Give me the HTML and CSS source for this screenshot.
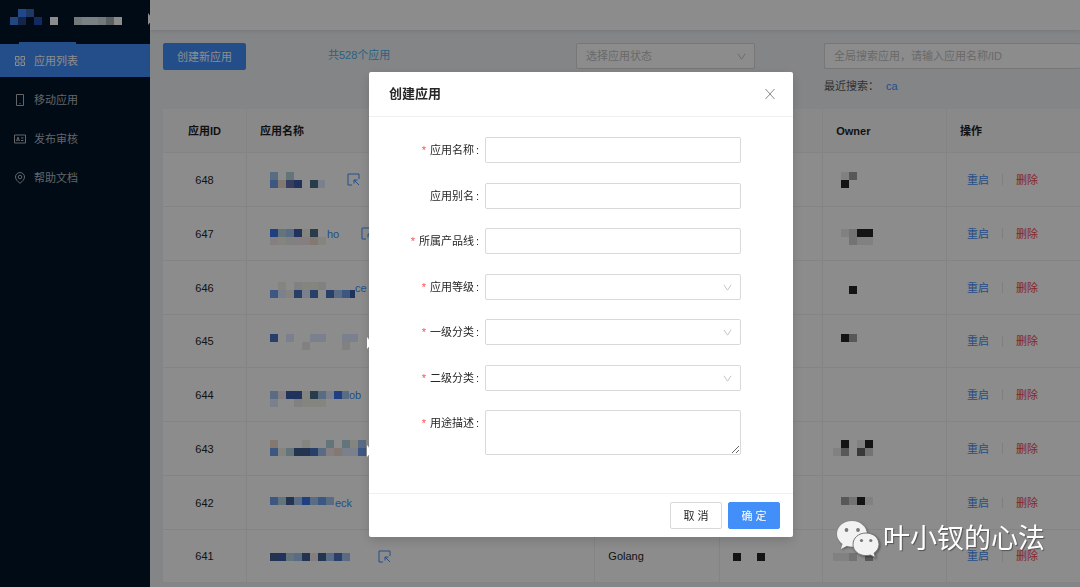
FILE: index.html
```html
<!DOCTYPE html>
<html lang="zh-CN">
<head>
<meta charset="utf-8">
<title>应用列表</title>
<link rel="stylesheet" href="styles.css">
</head>
<body>
<div class="layout">
  <aside class="sidebar">
    <div class="brand"><svg class="mosaic" data-top="-8" data-cells="_AB___________|CD_E_W__QRRQSW"></svg></div>
    <nav class="menu">
      <a class="menu-item active" href="#list">
        <svg class="menu-icon" viewBox="0 0 12 12"><path d="M1.500 1.500h3.500v3.500h-3.500zM7 1.500h3.500v3.500H7zM1.500 7h3.500v3.500h-3.500zM7 7h3.500v3.500H7z"/></svg>应用列表</a>
      <a class="menu-item" href="#mobile">
        <svg class="menu-icon" viewBox="0 0 12 12"><path d="M2.500.5h7v11h-7zM5.500 9.500h1"/></svg>移动应用</a>
      <a class="menu-item" href="#review">
        <svg class="menu-icon" viewBox="0 0 12 12"><path d="M.5 2h11v8H.5zM2.500 8l1.500-4 1.500 4M3 7h2M7 5h2.500M7 7.500h2.500"/></svg>发布审核</a>
      <a class="menu-item" href="#docs">
        <svg class="menu-icon" viewBox="0 0 12 12"><path d="M6 11.300C3.500 9.300 1.500 7.400 1.500 5a4.500 4.500 0 0 1 9 0c0 2.400-2 4.300-4.500 6.300z"/><circle cx="6" cy="5" r="1.800"/></svg>帮助文档</a>
    </nav>
  </aside>
  <div class="page">
    <header class="topbar"></header>
    <main class="content">
      <div class="toolbar">
        <div><button class="btn btn-primary btn-wide" type="button">创建新应用</button></div>
        <div class="count">共528个应用</div>
        <div class="select-wrap status">
          <select class="field placeholder" aria-label="应用状态"><option>选择应用状态</option></select>
          <svg class="arrow" viewBox="0 0 10 10"><path d="M1 2l4 6 4-6"/></svg>
        </div>
        <div class="search">
          <input class="field" type="text" aria-label="搜索应用" placeholder="全局搜索应用，请输入应用名称/ID">
          <div class="recent">最近搜索：<a href="#ca">ca</a></div>
        </div>
      </div>
      <table class="apps">
        <colgroup><col class="c-id"><col class="c-name"><col class="c-lang"><col class="c-line"><col class="c-owner"><col class="c-ops"></colgroup>
        <thead><tr><th class="id">应用ID</th><th>应用名称</th><th></th><th></th><th>Owner</th><th>操作</th></tr></thead>
        <tbody id="rows"></tbody>
      </table>
    </main>
  </div>
</div>

<div class="overlay">
  <form class="modal" role="dialog" aria-labelledby="dialog-title">
    <div class="modal-head">
      <h1 id="dialog-title">创建应用</h1>
      <button class="close" type="button" aria-label="关闭"><svg viewBox="0 0 12 12"><path d="M1.500 1l9 10M10.500 1l-9 10"/></svg></button>
    </div>
    <div class="modal-body">
      <div class="row"><label class="required" for="name">应用名称</label><input class="field" id="name" type="text"></div>
      <div class="row"><label for="alias">应用别名</label><input class="field" id="alias" type="text"></div>
      <div class="row"><label class="required" for="product">所属产品线</label><input class="field" id="product" type="text"></div>
      <div class="row"><label class="required" for="level">应用等级</label><div class="select-wrap"><select class="field" id="level"><option></option></select><svg class="arrow" viewBox="0 0 10 10"><path d="M1 2l4 6 4-6"/></svg></div></div>
      <div class="row"><label class="required" for="cat1">一级分类</label><div class="select-wrap"><select class="field" id="cat1"><option></option></select><svg class="arrow" viewBox="0 0 10 10"><path d="M1 2l4 6 4-6"/></svg></div></div>
      <div class="row"><label class="required" for="cat2">二级分类</label><div class="select-wrap"><select class="field" id="cat2"><option></option></select><svg class="arrow" viewBox="0 0 10 10"><path d="M1 2l4 6 4-6"/></svg></div></div>
      <div class="row"><label class="required" for="desc">用途描述</label><textarea class="field area" id="desc"></textarea></div>
    </div>
    <div class="modal-foot">
      <button class="btn" type="button">取 消</button>
      <button class="btn btn-primary" type="button">确 定</button>
    </div>
  </form>
</div>

<div class="watermark">
  <svg viewBox="0 0 44 38">
    <path d="M16 1C7.200 1 1 6.800 1 14c0 4.200 2.200 7.500 5.500 9.900L5 29l5.800-3c1.700.5 3.400.7 5.200.7C24.500 26.700 31 21 31 14S24.500 1 16 1z"/>
    <circle class="eye" cx="10.500" cy="10" r="1.900"/><circle class="eye" cx="22" cy="10" r="1.900"/>
    <path class="front" d="M30 13c-7.500 0-13 5-13 11.300s5.500 11.300 13 11.300c1.500 0 3-.2 4.300-.6L39.500 37.500 38 33.200c3-2.100 5-5.200 5-8.900C43 18 37.500 13 30 13z"/>
    <circle class="eye" cx="25.500" cy="20.500" r="1.600"/><circle class="eye" cx="34.800" cy="20.500" r="1.600"/>
  </svg>
  <span>叶小钗的心法</span>
</div>
<script src="app.js"></script>
</body>
</html>
```

FILE: styles.css
```css
* { box-sizing: border-box; }
body {
  margin: 0;
  font: 11px/18px "Liberation Sans", "Noto Sans CJK SC", sans-serif;
  color: #262626;
  background: #f0f2f5;
  overflow: hidden;
}
a { color: #428ffa; text-decoration: none; }
button, input, select, textarea { font: inherit; color: inherit; }
svg { fill: none; stroke: currentColor; }

.layout { display: flex; min-height: 100vh; }
.sidebar { flex: 0 0 150px; background: #001529; position: relative; }
.sidebar::after {
  content: ""; position: absolute; right: 0; top: 13px;
  width: 2px; height: 12px; background: #fff;
  clip-path: polygon(0 0, 100% 20%, 100% 80%, 0 100%);
}
.brand { height: 44px; padding: 1px 0 0 10px; }
.menu { display: flex; flex-direction: column; gap: 6px; }
.menu-item {
  display: flex; align-items: center; gap: 8px;
  height: 33px; padding-left: 14px; color: #b4b9bf; position: relative;
}
.menu-item.active { background: #428ffa; color: #fff; }
.menu-item.active::before {
  content: ""; position: absolute; left: 19px; top: -2px;
  width: 57px; height: 2px; background: #428ffa;
}
.menu-icon { width: 12px; height: 12px; }

.page { flex: 1; min-width: 0; overflow: hidden; }
.topbar { height: 30px; background: #fff; box-shadow: 0 1px 4px rgba(0, 21, 41, .12); }
.content { padding: 13px 0 0 13px; }
.toolbar {
  display: grid; grid-template-columns: 165fr 248fr 248fr 256fr;
  align-items: start; min-height: 66px;
}
.count { line-height: 24px; color: #4bb4f0; }
.status { margin-right: 69px; }
.recent { margin-top: 8px; color: #595959; }
.recent a { margin-left: 7px; }
.search .field { border-right: 0; }

.field {
  display: block; width: 100%; height: 26px; padding: 0 9px;
  border: 1px solid #d9d9d9; border-radius: 2px; background: #fff; outline: 0;
}
.field::placeholder, .placeholder { color: #bfbfbf; }
select.field { appearance: none; }
.select-wrap { position: relative; }
.arrow {
  position: absolute; right: 9px; top: 9px; width: 9px; height: 9px; color: #bfbfbf;
}
.area { height: 45px; resize: vertical; }

.btn {
  min-width: 52px; height: 27px; padding: 0 8px;
  border: 1px solid #d9d9d9; border-radius: 2px; background: #fff;
}
.btn-primary { border-color: #428ffa; background: #428ffa; color: #fff; }
.btn-wide { padding: 0 13px; }

.apps {
  width: 100%; table-layout: fixed; background: #fff;
  border-collapse: separate; border-spacing: 0;
}
.c-id { width: 9.150%; }
.c-name { width: 38%; }
.c-lang { width: 13.600%; }
.c-line { width: 11.250%; }
.c-owner { width: 13.500%; }
.apps th, .apps td {
  border-right: 1px solid #f0f0f0; border-bottom: 1px solid #f0f0f0;
  padding: 0 10px 0 13px; text-align: left; vertical-align: middle;
}
.apps th { height: 44px; background: #fafafa; font-weight: 700; color: #1f1f1f; }
.apps td { height: 54px; }
.apps tr:nth-child(4n) td { height: 53px; }
.apps .id { text-align: center; padding: 0; }
.apps tr > :last-child { border-right: 0; }
.apps td.tiles { padding-left: 10px; }
.name { display: flex; align-items: center; padding-left: 10px; }
.mosaic { display: block; height: 32px; stroke: none; }
.goto { width: 13px; height: 13px; color: #428ffa; margin-left: 22px; }
.ops { display: flex; align-items: center; padding-left: 7px; gap: 13px; }
.ops i { width: 1px; height: 11px; background: #e8e8e8; }
.ops .danger { color: #f04848; }

.overlay {
  position: fixed; inset: 0; padding: 72px 0 0 82px;
  display: flex; justify-content: center; align-items: flex-start;
  background: rgba(0, 0, 0, .45);
}
.modal {
  width: 424px; background: #fff; border-radius: 2px; position: relative;
  box-shadow: 0 4px 12px rgba(0, 0, 0, .15);
}
.modal::before, .modal::after {
  content: ""; position: absolute; left: -2px; top: 265px;
  width: 2px; height: 12px; background: #fff;
  clip-path: polygon(0 0, 100% 20%, 100% 80%, 0 100%);
}
.modal::after { top: 373px; }
.modal-head {
  display: flex; align-items: center; justify-content: space-between;
  height: 45px; padding: 0 17px 0 20px; border-bottom: 1px solid #f0f0f0;
}
h1 { margin: 0; font-size: 13px; font-weight: 700; line-height: 20px; }
.close { display: flex; padding: 0; border: 0; background: none; color: #8c8c8c; }
.close svg { width: 12px; height: 12px; }
.modal-body {
  display: grid; align-content: space-between;
  min-height: 376px; padding: 20px 52px 38px 0;
}
.row { display: grid; grid-template-columns: 110px 1fr; column-gap: 6px; }
.row label { line-height: 26px; text-align: right; }
.row label::after { content: ":"; margin-left: 2px; }
.required::before { content: "*"; margin-right: 4px; color: #ff4d4f; }
.modal-foot {
  display: flex; justify-content: flex-end; gap: 6px;
  padding: 8px 13px; border-top: 1px solid #f0f0f0;
}

.watermark {
  position: fixed; right: 35px; bottom: 28px;
  display: flex; align-items: center; gap: 3px;
  font-size: 27px; line-height: 40px; color: #fff;
  text-shadow: 1px 1px 1px rgba(0, 0, 0, .4);
}
.watermark svg { width: 44px; height: 38px; fill: #f2f2f2; stroke: none; filter: drop-shadow(1px 1px 1px rgba(0, 0, 0, .4)); }
.watermark .front { stroke: #777; stroke-width: 1; }
.watermark .eye { fill: #777; }
```

FILE: app.js
```js
const colors = {
  A: '#3c83ff', B: '#3a64b6', C: '#4080ec', D: '#244588', E: '#244cad',
  W: '#ffffff', Q: '#d1dbe0', R: '#dfebf2', S: '#a8adb2',
  a: '#3774ec', b: '#a4c4f0', c: '#e0ecff', d: '#4976bf',
  e: '#496f86', f: '#709eee', g: '#eef2e6', h: '#f5e8ec', n: '#3f6090',
  t: '#b4d4e0', o: '#f0dccc', p: '#6672ae', s: '#3c5ea8',
  i: '#262626', j: '#a0a0a0', k: '#d1d1d1', l: '#ececec', x: '#686868'
};

const apps = [
  { id: 648, top: -8, name: 'b_t____|fops_ec', width: 55, link: true, owner: ['-8', '_lj|_i_'] },
  { id: 647, top: -5, name: 'atbsge_|hglhhog', width: 57, text: 'ho', link: true, owner: ['-5', '_lkii|__kll'] },
  { id: 646, top: -6, name: '_g_lggl____|fcgdcd_dbfs', width: 85, text: 'ce', owner: ['-2', '__i'] },
  { id: 645, top: -7, name: 'd_c__cc__cc|____l____l', width: 90, owner: ['-7', '_ij'] },
  { id: 644, top: -4, name: 'bhssgebcab|c__lggg', width: 79, text: 'ob', owner: ['0', '_'] },
  { id: 643, top: -9, name: 'o___g__t_tgb|fgtnndbhoccf', width: 96, owner: ['-9', '_i_li|lj_xk'] },
  { id: 642, top: -6, name: 'ftnbabfb', width: 65, text: 'eck', owner: ['-6', '_jkil'] },
  { id: 641, top: -3, name: 'nstbnhnbdb', width: 86, link: true, lang: 'Golang', line: 'i__i', owner: ['-3', 'llk_j'] }
];

function fillMosaic(svg) {
  const rows = svg.dataset.cells.split('|');
  const top = 16 + Number(svg.dataset.top);
  const width = Number(svg.dataset.width) || rows[0].length * 8;
  svg.setAttribute('width', width);
  svg.innerHTML = rows.map((row, y) => [...row].map((c, x) =>
    c === '_' ? '' : `<rect x="${x * 8}" y="${top + y * 8}" width="8" height="8" fill="${colors[c]}"/>`
  ).join('')).join('');
}

const mosaic = (top, cells, width) =>
  `<svg class="mosaic" data-top="${top}" data-cells="${cells}" data-width="${width || ''}"></svg>`;
const gotoIcon = '<svg class="goto" viewBox="0 0 13 13"><path d="M5 12H1V1h11v5M12 12L7 7M7 10.500V7h3.500"/></svg>';

document.getElementById('rows').innerHTML = apps.map(app => `
  <tr>
    <td class="id">${app.id}</td>
    <td><div class="name">${mosaic(app.top, app.name, app.width)}<a href="#${app.id}">${app.text || ''}</a>${app.link ? gotoIcon : ''}</div></td>
    <td>${app.lang || ''}</td>
    <td>${app.line ? mosaic(-3, app.line) : ''}</td>
    <td class="tiles">${mosaic(app.owner[0], app.owner[1])}</td>
    <td><div class="ops"><a href="#restart">重启</a><i></i><a class="danger" href="#delete">删除</a></div></td>
  </tr>`).join('');

document.querySelectorAll('.mosaic').forEach(fillMosaic);
```
